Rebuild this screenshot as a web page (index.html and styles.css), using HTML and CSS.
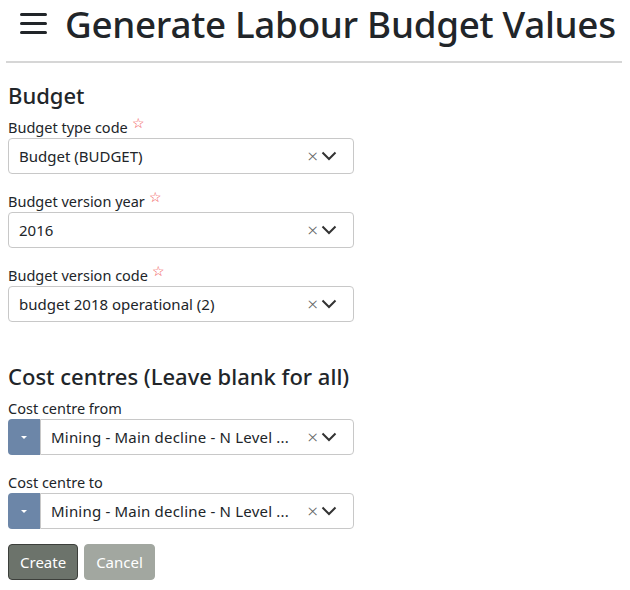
FILE: index.html
```html
<!DOCTYPE html>
<html lang="en">
<head>
    <meta charset="UTF-8">
    <meta name="viewport" content="width=device-width, initial-scale=1.0">
    <title>Generate Labour Budget Values</title>
    <link rel="stylesheet" href="styles.css">
</head>
<body>
    <header class="page-header">
        <span class="menu-icon">
            <svg width="28" height="22" viewBox="0 0 28 22">
                <rect x="0" y="0" width="27" height="3" rx="1.5" fill="#212529"/>
                <rect x="0" y="9" width="27" height="3" rx="1.5" fill="#212529"/>
                <rect x="0" y="18" width="27" height="3" rx="1.5" fill="#212529"/>
            </svg>
        </span>
        <h1>Generate Labour Budget Values</h1>
    </header>
    <hr class="divider">

    <section class="form-section">
        <h2>Budget</h2>
        <div class="field">
            <label>Budget type code <span class="req">&#9734;</span></label>
            <div class="select">
                <span class="value">Budget (BUDGET)</span>
                <span class="clear">&times;</span>
                <svg class="chevron" width="16" height="10" viewBox="0 0 16 10"><path d="M1.5 1.5 L8 8 L14.5 1.5" fill="none" stroke="#333" stroke-width="2"/></svg>
            </div>
        </div>
        <div class="field">
            <label>Budget version year <span class="req">&#9734;</span></label>
            <div class="select">
                <span class="value">2016</span>
                <span class="clear">&times;</span>
                <svg class="chevron" width="16" height="10" viewBox="0 0 16 10"><path d="M1.5 1.5 L8 8 L14.5 1.5" fill="none" stroke="#333" stroke-width="2"/></svg>
            </div>
        </div>
        <div class="field">
            <label>Budget version code <span class="req">&#9734;</span></label>
            <div class="select">
                <span class="value">budget 2018 operational (2)</span>
                <span class="clear">&times;</span>
                <svg class="chevron" width="16" height="10" viewBox="0 0 16 10"><path d="M1.5 1.5 L8 8 L14.5 1.5" fill="none" stroke="#333" stroke-width="2"/></svg>
            </div>
        </div>
    </section>

    <section class="form-section cost">
        <h2>Cost centres (Leave blank for all)</h2>
        <div class="field">
            <label>Cost centre from</label>
            <div class="input-row">
                <button class="drop-btn"><span class="caret"></span></button>
                <div class="select joined">
                    <span class="value">Mining - Main decline - N Level ...</span>
                    <span class="clear">&times;</span>
                    <svg class="chevron" width="16" height="10" viewBox="0 0 16 10"><path d="M1.5 1.5 L8 8 L14.5 1.5" fill="none" stroke="#333" stroke-width="2"/></svg>
                </div>
            </div>
        </div>
        <div class="field">
            <label>Cost centre to</label>
            <div class="input-row">
                <button class="drop-btn"><span class="caret"></span></button>
                <div class="select joined">
                    <span class="value">Mining - Main decline - N Level ...</span>
                    <span class="clear">&times;</span>
                    <svg class="chevron" width="16" height="10" viewBox="0 0 16 10"><path d="M1.5 1.5 L8 8 L14.5 1.5" fill="none" stroke="#333" stroke-width="2"/></svg>
                </div>
            </div>
        </div>
    </section>

    <div class="actions">
        <button class="btn btn-create">Create</button>
        <button class="btn btn-cancel">Cancel</button>
    </div>
</body>
</html>
```
FILE: styles.css
```css
body {
    font-family: "Noto Sans", "Open Sans", sans-serif;
    color: #212529;
    margin: 0;
    padding: 0 8px;
    background-color: white;
}
.page-header {
    display: flex;
    align-items: center;
    height: 48px;
    padding-left: 12px;
}
.menu-icon {
    display: flex;
    width: 45px;
}
h1 {
    margin: 0;
    font-size: 36.8px;
    font-weight: 500;
    letter-spacing: -0.3px;
    line-height: 48px;
    white-space: nowrap;
}
.divider {
    margin: 13px 0 0 -2px;
    border: none;
    border-top: 2px solid #d6d6d6;
}
h2 {
    margin: 0 0 8px 0;
    font-size: 22px;
    font-weight: 500;
    line-height: 28px;
}
.form-section {
    margin-top: 18px;
}
.form-section.cost {
    margin-top: 40px;
}
.field {
    margin-bottom: 17px;
}
label {
    display: block;
    font-size: 14.5px;
    line-height: 20px;
    margin-bottom: 1px;
}
.req {
    color: #f04848;
    font-size: 14px;
    vertical-align: top;
    position: relative;
    top: -4px;
}
.select {
    display: flex;
    align-items: center;
    width: 346px;
    height: 36px;
    box-sizing: border-box;
    border: 1px solid #c8c8c8;
    border-radius: 4px;
    padding: 0 16px 0 10px;
    font-size: 15px;
}
.value {
    flex: 1;
    white-space: nowrap;
    overflow: hidden;
}
.clear {
    color: #666;
    font-size: 19px;
    font-weight: 300;
    margin-right: 3px;
}
.chevron {
    display: block;
}
.input-row {
    display: flex;
}
.drop-btn {
    width: 32px;
    height: 36px;
    border: none;
    border-radius: 4px 0 0 4px;
    background-color: #6c86a8;
    display: flex;
    align-items: center;
    justify-content: center;
    padding: 0;
}
.caret {
    width: 0;
    height: 0;
    border-left: 3px solid transparent;
    border-right: 3px solid transparent;
    border-top: 3px solid white;
}
.select.joined {
    width: 314px;
    border-radius: 0 4px 4px 0;
}
.select.joined .value {
    letter-spacing: 0.2px;
}
.actions {
    display: flex;
    gap: 6px;
    margin-top: -2px;
}
.btn {
    height: 36px;
    padding: 0 11px;
    border-radius: 4px;
    font-family: "Noto Sans", sans-serif;
    font-size: 15px;
    color: white;
    cursor: pointer;
}
.btn-create {
    background-color: #6c736b;
    border: 1px solid #3c3f3b;
}
.btn-cancel {
    background-color: #a2a7a0;
    border: 1px solid #a2a7a0;
}
```
